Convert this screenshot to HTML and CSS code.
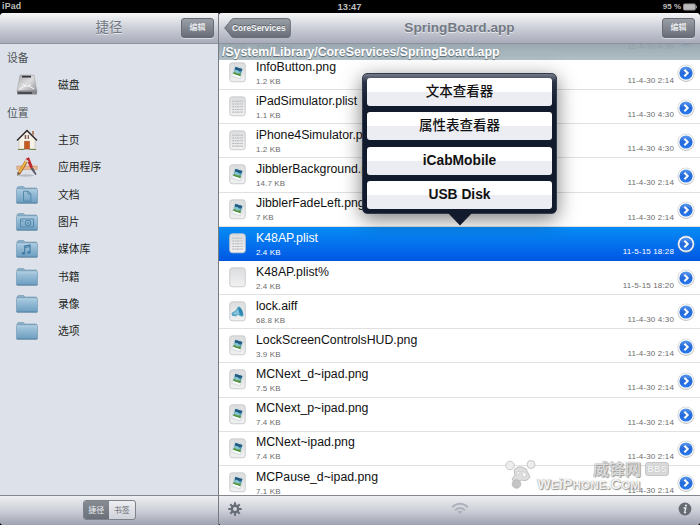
FILE: index.html
```html
<!DOCTYPE html>
<html lang="zh-CN">
<head>
<meta charset="utf-8">
<title>SpringBoard.app</title>
<link rel="stylesheet" href="styles.css">
</head>
<body>
<svg class="defs" aria-hidden="true">
  <defs>
    <linearGradient id="gPage" x1="0" y1="0" x2="0" y2="1"><stop offset="0" stop-color="#dcdddf"/><stop offset="1" stop-color="#f1f1f2"/></linearGradient>
    <linearGradient id="gFolder" x1="0" y1="0" x2="0" y2="1"><stop offset="0" stop-color="#aacbe0"/><stop offset="1" stop-color="#6b9dc0"/></linearGradient>
    <linearGradient id="gBlue" x1="0" y1="0" x2="0" y2="1"><stop offset="0" stop-color="#5b9bee"/><stop offset=".5" stop-color="#2468d8"/><stop offset="1" stop-color="#2a7bf0"/></linearGradient>
    <linearGradient id="gDisk" x1="0" y1="0" x2="1" y2="1"><stop offset="0" stop-color="#a8a8ac"/><stop offset=".5" stop-color="#dcdcde"/><stop offset="1" stop-color="#929298"/></linearGradient>
    <linearGradient id="gBack" x1="0" y1="0" x2="0" y2="1"><stop offset="0" stop-color="#9b9fa6"/><stop offset="1" stop-color="#676d78"/></linearGradient>
  </defs>
  <symbol id="page" viewBox="0 0 18 22"><rect x=".8" y=".8" width="16.4" height="20" rx="2.6" fill="url(#gPage)" stroke="#c9cacc" stroke-width="1"/></symbol>
  <symbol id="png" viewBox="0 0 18 22"><use href="#page" width="18" height="22"/><g transform="rotate(17 9 11)"><rect x="4.3" y="5" width="9.4" height="11.5" fill="#fafcfc" stroke="#bfc9cc" stroke-width=".6"/><rect x="5.1" y="5.8" width="7.8" height="7.8" fill="#3c89ab"/><path d="M5.1 6h7.8v1.8l-3 1.2-4.8-.6z" fill="#245a80"/><path d="M5.1 9.6l3-1 4.8 2v2.6H5.1z" fill="#86c4d0"/><path d="M5.1 11l3 1 4.8-1.2v2.8H5.1z" fill="#5a9638"/></g></symbol>
  <symbol id="plist" viewBox="0 0 18 22"><use href="#page" width="18" height="22"/><path d="M3.5 5.5h11M3.5 8.4h11M3.5 11.3h11M3.5 14.2h11M3.5 17h11" stroke="#b4b5b7" stroke-width="1.2" stroke-dasharray="2.2 .7 1.2 .6"/></symbol>
  <symbol id="aiff" viewBox="0 0 18 22"><use href="#page" width="18" height="22"/><path d="M2.6 13.2Q3 11.6 5 11.2 8.3 10 9 6.6q1.2-1.6 3 0 3 3.4 3.4 8.4-.8 1.5-2.4 1.2l-3.6-1.8-2.6 2-1.8-.8-1.4.2z" fill="#4a9fc2"/><path d="M3.4 12.8Q8.6 11.6 9.8 7.4l1.2 6.4-4 1z" fill="#86c3da"/><ellipse cx="12.3" cy="11" rx="1.6" ry="4.2" transform="rotate(-22 12.3 11)" fill="#2a86b0"/></symbol>
  <symbol id="go" viewBox="0 0 18 18"><circle cx="9" cy="9.5" r="8.4" fill="#8d8d90" opacity=".5"/><circle cx="9" cy="9" r="8.1" fill="#fff" stroke="#c6c7ca" stroke-width=".5"/><circle cx="9" cy="9" r="6.6" fill="url(#gBlue)"/><path d="M7.4 5.8L10.7 9l-3.3 3.2" fill="none" stroke="#fff" stroke-width="2"/></symbol>
  <symbol id="folder" viewBox="0 0 22 18"><path d="M1 3.2V2Q1 1 2 1l.8-.7h4.5L9 2h11q1 0 1 1.2z" fill="#8bb0ca" stroke="#7397b0" stroke-width=".6"/><rect x=".5" y="3.2" width="21" height="14" rx=".8" fill="url(#gFolder)" stroke="#6c93b0" stroke-width=".6"/><path d="M1 3.8h20" stroke="#c1dae8" stroke-width=".7"/><path d="M.7 17h20.6" stroke="#557d9a" stroke-width=".8"/></symbol>
</svg>

<div class="screen">
  <header class="status">
    <span>iPad</span><time>13:47</time>
    <span class="power">95 % <svg width="14" height="8" viewBox="0 0 14 8"><rect x=".5" y=".9" width="11.8" height="6.2" rx="1" fill="#b9b9b9" stroke="#8b8b8b" stroke-width=".9"/><path d="M13.3 2.7v2.6" stroke="#aaa"/></svg></span>
  </header>
  <div class="panes">
    <aside class="side">
      <div class="nav"><h1 class="cjk-title">捷径</h1><button class="edit">编辑</button></div>
      <ul class="places">
        <li class="head">设备</li>
        <li><svg viewBox="0 0 22 22"><path d="M4 1h14l3 16.5H1z" fill="url(#gDisk)" stroke="#9a9a9f" stroke-width=".5"/><path d="M1 16.5h20v4H1z" fill="#85858b"/><path d="M2 19h14" stroke="#39393d" stroke-width="1.3"/><path d="M6 2.7h9" stroke="#303034" stroke-width="1.8"/><path d="M4 15q7-6 14 0M7 10q4 4 8 0" stroke="#f0f0f2" stroke-width="1.1" fill="none"/></svg>磁盘</li>
        <li class="head">位置</li>
        <li><svg viewBox="0 0 22 22"><path d="M3 10l8-7.5 8 7.5v10H3z" fill="#f6f2e7" stroke="#b9ae9c" stroke-width=".5"/><path d="M16 2h2v5l-2-2z" fill="#b08368"/><path d="M1 11.5L11 1.5l10 10" fill="none" stroke="#302a2c" stroke-width="1.5"/><rect x="8.7" y="6" width="4.2" height="4" fill="#6c5251"/><path d="M9.9 6h2v4h-2z" fill="#ddc9bc"/><path d="M8.5 12.3h5V20h-5z" fill="#c95c1d" stroke="#8d4320" stroke-width=".5"/><path d="M2 20.5h6.5M13.5 20.5H20" stroke="#71824b" stroke-width="1.2"/></svg>主页</li>
        <li><svg viewBox="0 0 22 22"><ellipse cx="10" cy="19.5" rx="8" ry="1.2" fill="#b8bcc2"/><path d="M.8 10h20.4v3.6H.8z" fill="#eab58b" stroke="#c38c65" stroke-width=".5"/><path d="M10 2.5l3-1.2 4 10-2.5 1.2z" fill="#bd2931"/><path d="M14.4 12.5l2.6-1 3.5 6.8-1 .9z" fill="#5c5664"/><path d="M11.2 4l-8.7 14" stroke="#9a5c26" stroke-width="3.2"/><path d="M10.8 4.2L2.8 17" stroke="#f2b843" stroke-width="2"/><path d="M1.7 15.7l2.5 1.8-3.2 2.4z" fill="#745b49"/><path d="M9.5 4.2l2.8 1.6" stroke="#d9d9da" stroke-width="1.7"/></svg>应用程序</li>
        <li><svg viewBox="0 0 22 22"><use href="#folder" y="2" width="22" height="18"/><path d="M7.5 7.2h4.8l2.6 2.6v7.4H7.5zM12 7.2V10h2.9" fill="none" stroke="#5489ac" stroke-width="1"/></svg>文档</li>
        <li><svg viewBox="0 0 22 22"><use href="#folder" y="2" width="22" height="18"/><path d="M4.5 8h13v8h-13z" fill="none" stroke="#5489ac"/><circle cx="12" cy="12" r="2.7" fill="none" stroke="#5489ac" stroke-width="1.1"/><circle cx="12" cy="12" r=".9" fill="#5489ac"/><path d="M5.5 10h2" stroke="#5489ac"/></svg>图片</li>
        <li><svg viewBox="0 0 22 22"><use href="#folder" y="2" width="22" height="18"/><path d="M8.7 15.2V8l5.4-1v6.8M8.7 9.5l5.4-1" fill="none" stroke="#417ba4" stroke-width="1.1"/><ellipse cx="7.5" cy="15.4" rx="1.7" ry="1.3" fill="#417ba4"/><ellipse cx="12.9" cy="14.4" rx="1.7" ry="1.3" fill="#417ba4"/></svg>媒体库</li>
        <li><svg viewBox="0 0 22 22"><use href="#folder" y="2" width="22" height="18"/></svg>书籍</li>
        <li><svg viewBox="0 0 22 22"><use href="#folder" y="2" width="22" height="18"/></svg>录像</li>
        <li><svg viewBox="0 0 22 22"><use href="#folder" y="2" width="22" height="18"/></svg>选项</li>
      </ul>
      <footer class="bar center"><div class="segment"><span class="on">捷径</span><span>书签</span></div></footer>
    </aside>

    <main class="files">
      <div class="nav">
        <div class="back"><svg viewBox="0 0 68 20" preserveAspectRatio="none"><path d="M.7 10Q5 5 7.5 1.7 8.3.6 10 .6h54.5q2.8 0 2.8 2.8v13.2q0 2.8-2.8 2.8H10q-1.7 0-2.5-1.1Q5 15 .7 10z" fill="url(#gBack)" stroke="#666b74"/></svg><span>CoreServices</span></div>
        <h1>SpringBoard.app</h1><button class="edit">编辑</button>
      </div>
      <div class="viewport">
        <ul class="list">
          <li><svg class="ico"><use href="#png"/></svg><div><b></b><small>839 Bytes</small></div><time>11-4-30 4:30</time><svg class="go"><use href="#go"/></svg></li>
          <li><svg class="ico"><use href="#png"/></svg><div><b>InfoButton.png</b><small>1.2 KB</small></div><time>11-4-30 2:14</time><svg class="go"><use href="#go"/></svg></li>
          <li><svg class="ico"><use href="#plist"/></svg><div><b>iPadSimulator.plist</b><small>1.1 KB</small></div><time>11-4-30 4:30</time><svg class="go"><use href="#go"/></svg></li>
          <li><svg class="ico"><use href="#plist"/></svg><div><b>iPhone4Simulator.plist</b><small>1.2 KB</small></div><time>11-4-30 4:30</time><svg class="go"><use href="#go"/></svg></li>
          <li><svg class="ico"><use href="#png"/></svg><div><b>JibblerBackground.png</b><small>14.7 KB</small></div><time>11-4-30 2:14</time><svg class="go"><use href="#go"/></svg></li>
          <li><svg class="ico"><use href="#png"/></svg><div><b>JibblerFadeLeft.png</b><small>7 KB</small></div><time>11-4-30 2:14</time><svg class="go"><use href="#go"/></svg></li>
          <li class="selected"><svg class="ico"><use href="#plist"/></svg><div><b>K48AP.plist</b><small>2.4 KB</small></div><time>11-5-15 18:28</time><svg class="go"><use href="#go"/></svg></li>
          <li><svg class="ico"><use href="#page"/></svg><div><b>K48AP.plist%</b><small>2.4 KB</small></div><time>11-5-15 18:20</time><svg class="go"><use href="#go"/></svg></li>
          <li><svg class="ico"><use href="#aiff"/></svg><div><b>lock.aiff</b><small>68.8 KB</small></div><time>11-4-30 4:30</time><svg class="go"><use href="#go"/></svg></li>
          <li><svg class="ico"><use href="#png"/></svg><div><b>LockScreenControlsHUD.png</b><small>3.9 KB</small></div><time>11-4-30 2:14</time><svg class="go"><use href="#go"/></svg></li>
          <li><svg class="ico"><use href="#png"/></svg><div><b>MCNext_d~ipad.png</b><small>7.5 KB</small></div><time>11-4-30 2:14</time><svg class="go"><use href="#go"/></svg></li>
          <li><svg class="ico"><use href="#png"/></svg><div><b>MCNext_p~ipad.png</b><small>7.4 KB</small></div><time>11-4-30 2:14</time><svg class="go"><use href="#go"/></svg></li>
          <li><svg class="ico"><use href="#png"/></svg><div><b>MCNext~ipad.png</b><small>7.4 KB</small></div><time>11-4-30 2:14</time><svg class="go"><use href="#go"/></svg></li>
          <li><svg class="ico"><use href="#png"/></svg><div><b>MCPause_d~ipad.png</b><small>7.1 KB</small></div><time>11-4-30 2:14</time><svg class="go"><use href="#go"/></svg></li>
        </ul>
        <div class="path">/System/Library/CoreServices/SpringBoard.app</div>
      </div>
      <footer class="bar tools">
        <svg width="14" height="14" viewBox="-7 -7 14 14"><g stroke="#686e78" stroke-width="2.1"><path d="M0-6.7V6.7M-6.7 0H6.7M-4.7-4.7L4.7 4.7M-4.7 4.7L4.7-4.7"/></g><circle r="4.4" fill="#686e78"/><circle r="2" fill="#d3d6dd"/></svg>
        <svg width="18" height="13" viewBox="0 0 18 13"><g fill="none" stroke="#aeb1b9" stroke-width="1.9"><path d="M1 5.2q8-7 16 0M4 8.2q5-4.3 10 0"/></g><path d="M6.3 9.6q2.7-1.8 5.4 0L9 12z" fill="#aeb1b9"/></svg>
        <svg width="14" height="14" viewBox="0 0 14 14"><circle cx="7" cy="7" r="6.4" fill="#666b73"/><circle cx="7.9" cy="3.5" r="1.1" fill="#e8eaee"/><path d="M5.6 6h2.2l-1.2 4.6h1.5" fill="none" stroke="#e8eaee" stroke-width="1.4"/></svg>
      </footer>
    </main>
  </div>

  <div class="popover">
    <button>文本查看器</button><button>属性表查看器</button><button class="latin">iCabMobile</button><button class="latin">USB Disk</button>
    <svg class="tip" viewBox="0 0 24 13"><path d="M0 0h24L12 12.5z" fill="#121a2e"/></svg>
  </div>

  <div class="mark">
    <svg class="mouse" viewBox="0 0 32 30"><path d="M9 10q5-6 12-1l4 8q-3 5-8 3l-7 3-3-4 3-4z" fill="#dedede" stroke="#aaa" stroke-width=".7"/><circle cx="5" cy="5.5" r="4.3" fill="#ededed" stroke="#b5b5b5" stroke-width=".7"/><circle cx="26" cy="4.5" r="4" fill="#ededed" stroke="#b5b5b5" stroke-width=".7"/><circle cx="11.5" cy="24" r="4.3" fill="#c5c5c5" stroke="#aaa" stroke-width=".6"/><path d="M11 13l4-2-1 4zM17 11l5 4-4 2z" fill="#fff" stroke="#bbb" stroke-width=".5"/></svg>
    <div class="words"><div class="zh"><span>威锋网</span><i>BBS</i></div><div class="domain">W<small>E</small>i<big>P</big><small>HONE</small>.C<small>OM</small></div></div>
  </div>
</div>
</body>
</html>
```
FILE: styles.css
```css
* { box-sizing: border-box; }
body { margin: 0; background: #000; font-family: "Liberation Sans", "Noto Sans CJK SC", sans-serif; }
ul { list-style: none; margin: 0; padding: 0; }
button { font-family: inherit; padding: 0; }
.defs { position: absolute; width: 0; height: 0; }
.screen { position: relative; width: 700px; height: 525px; overflow: hidden; display: flex; flex-direction: column; background: #000; }
.status { flex: none; height: 13px; display: grid; grid-template-columns: 1fr auto 1fr; align-items: center; padding: 0 3px 0 2px; color: #bfbfbf; font-size: 8.8px; font-weight: bold; line-height: 13px; }
.status span:first-child { letter-spacing: .2px; }
.status time { font-size: 9.4px; }
.power { display: flex; justify-content: flex-end; align-items: center; gap: 2px; font-size: 8px; }
.panes { flex: 1; min-height: 0; display: flex; }
.side { width: 219px; display: flex; flex-direction: column; border-right: 1px solid #777b82; background: #dde2ea; border-radius: 4px 0 0 4px; overflow: hidden; }
.files { flex: 1; min-width: 0; display: flex; flex-direction: column; background: #fff; border-radius: 3px 4px 4px 3px; overflow: hidden; }
.nav { flex: none; position: relative; height: 31px; display: flex; align-items: center; justify-content: center; background: linear-gradient(#f5f6f7, #cccfd7 50%, #a8abba); border-bottom: 1px solid #8e929c; }
.nav h1 { margin: 0; font-size: 13.6px; line-height: 18px; color: #727983; text-shadow: 0 1px #e5e7eb; }
.nav h1.cjk-title { font-weight: 400; font-size: 13.4px; }
.edit { position: absolute; right: 5px; top: 5px; width: 33px; height: 20px; border: 1px solid #666b74; border-radius: 3px; background: linear-gradient(#9b9fa6, #676d78); color: #f3f4f5; font-size: 8px; font-weight: 500; line-height: 18px; box-shadow: 0 1px #d8dae0; }
.side .edit { right: 4px; }
.back { position: absolute; left: 5px; top: 5px; width: 67px; height: 20px; }
.back svg { position: absolute; width: 100%; height: 100%; }
.back span { position: relative; display: block; padding-left: 8px; font-size: 8.4px; line-height: 21px; font-weight: bold; color: #f3f4f5; text-shadow: 0 -1px #5d626b; }
.places { flex: 1; padding-top: .5px; }
.places li { height: 27.33px; display: flex; align-items: center; gap: 20px; padding-left: 16px; font-size: 10.8px; line-height: 16px; color: #1d1f22; }
.places li.head { padding-left: 7px; color: #4d5258; }
.places svg { width: 22px; height: 22px; }
.bar { flex: none; height: 30px; background: linear-gradient(#eeeff2, #cdd0d8 50%, #9fa2b0); border-top: 1px solid #85888f; }
.center { display: flex; justify-content: center; padding-top: 4px; }
.segment { display: flex; width: 53px; height: 20px; border: 1px solid #7d828b; border-radius: 3px; overflow: hidden; font-size: 8px; line-height: 19px; text-align: center; color: #666b73; background: linear-gradient(#eeeff2, #cfd2d9); }
.segment span { flex: 1; }
.segment .on { background: linear-gradient(#878c93, #6a7079); color: #eceef0; }
.viewport { flex: 1; min-height: 0; position: relative; overflow: hidden; }
.list { margin-top: -22.2px; }
.list li { height: 34.17px; display: flex; padding: 0 6px 0 10px; border-bottom: 1px solid #e0e0e0; }
.list .ico { flex: none; width: 17px; height: 21px; margin-top: 6px; }
.list div { flex: 1; min-width: 0; padding-left: 10px; }
.list b { display: block; height: 17px; margin-top: 2.8px; font-size: 12.3px; line-height: 17px; font-weight: 400; color: #111; white-space: nowrap; }
.list small { display: block; font-size: 8px; line-height: 11px; color: #6c6c6c; letter-spacing: .1px; }
.list time { font-size: 8px; line-height: 10px; margin-top: 20px; color: #6c6c6c; white-space: nowrap; letter-spacing: .15px; }
.list .go { flex: none; width: 18px; height: 18px; margin: 8.4px -.5px 0 2.5px; }
.list .selected { background: linear-gradient(#088cf5, #0059e5); border-bottom-color: #0055dd; }
.list .selected b, .list .selected small, .list .selected time { color: #fff; }
.path { position: absolute; inset: 0 0 auto; height: 16px; padding-left: 3px; background: linear-gradient(rgba(143,158,168,.9), rgba(172,187,195,.94)); color: #fff; font-size: 12.3px; font-weight: bold; line-height: 16px; text-shadow: 0 1px 1px #59656d; }
.tools { display: flex; justify-content: space-between; padding: 6px 8px 0 9px; }
.popover { position: absolute; left: 362px; top: 73px; width: 195px; height: 141px; padding: 4px; display: flex; flex-direction: column; gap: 6.2px; border: 1px solid #333a4a; border-radius: 5px; background: linear-gradient(#747a88, #2b3346 8px, #121a2e 30px); box-shadow: 0 5px 20px rgba(0,0,0,.52); }
.popover button { flex: 1; border: 0; border-radius: 3px; background: linear-gradient(#fff 49%, #ebedf2 50%); color: #111; font-size: 13.5px; font-weight: 500; line-height: 20px; }
.popover .latin { font-weight: bold; font-size: 13.8px; }
.tip { position: absolute; left: 85px; top: 139px; width: 24px; height: 13px; }
.mark { position: absolute; left: 505px; top: 460px; display: flex; color: #f1f1f1; text-shadow: 0 0 1px #888, 1px 1px 1px #999; }
.mouse { width: 32px; height: 30px; }
.words { display: flex; flex-direction: column; }
.zh { display: flex; align-items: center; justify-content: flex-end; gap: 4px; padding: 1px 0 0 56px; height: 17px; font-size: 16px; line-height: 17px; font-weight: 500; color: #ddd; }
.zh i { width: 24px; height: 14px; border-radius: 3px; background: #d9d9d9; border: 1px solid #c6c6c6; font: bold 9px/12px "Liberation Sans", sans-serif; text-align: center; color: #f4f4f4; text-shadow: 0 0 1px #aaa; }
.domain { font-size: 14.6px; line-height: 14px; font-weight: bold; white-space: nowrap; }
.domain small { font-size: 11.8px; }
.domain big { font-size: 14.6px; }
```
